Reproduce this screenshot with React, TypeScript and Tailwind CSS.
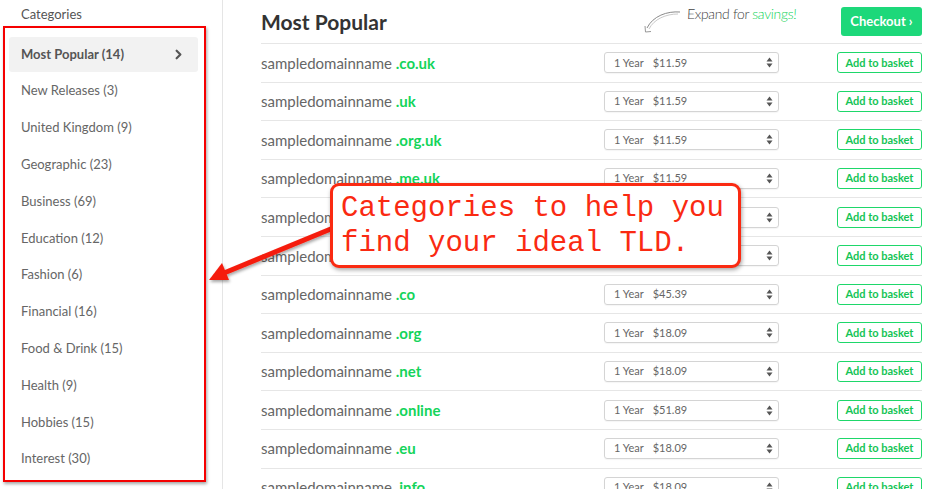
import { ChevronRight } from "lucide-react";

const CATEGORIES = [
  "Most Popular (14)",
  "New Releases (3)",
  "United Kingdom (9)",
  "Geographic (23)",
  "Business (69)",
  "Education (12)",
  "Fashion (6)",
  "Financial (16)",
  "Food & Drink (15)",
  "Health (9)",
  "Hobbies (15)",
  "Interest (30)",
];

const DOMAINS = [
  { tld: ".co.uk", price: "$11.59" },
  { tld: ".uk", price: "$11.59" },
  { tld: ".org.uk", price: "$11.59" },
  { tld: ".me.uk", price: "$11.59" },
  { tld: ".com", price: "$14.29" },
  { tld: ".london", price: "$32.49" },
  { tld: ".co", price: "$45.39" },
  { tld: ".org", price: "$18.09" },
  { tld: ".net", price: "$18.09" },
  { tld: ".online", price: "$51.89" },
  { tld: ".eu", price: "$18.09" },
  { tld: ".info", price: "$18.09" },
];

function SelectArrows() {
  return (
    <svg width="7" height="11" viewBox="0 0 7 11" className="text-[#555]">
      <path d="M3.5 0.5 L6.5 4.5 H0.5 Z" fill="currentColor" />
      <path d="M3.5 10.5 L6.5 6.5 H0.5 Z" fill="currentColor" />
    </svg>
  );
}

function DomainRow({ tld, price }: { tld: string; price: string }) {
  return (
    <div className="flex h-[38.6px] shrink-0 items-center border-b border-[#e6e6e6]">
      <div className="flex-1 text-[15px] text-[#666]">
        sampledomainname <span className="font-bold text-[#14d45a]">{tld}</span>
      </div>
      <div className="flex h-[21px] w-[175px] items-center rounded-[3px] border border-[#d4d4d4] pl-[9px] pr-[5px] text-[11px] text-[#666] shadow-[0_1px_1px_rgba(0,0,0,0.04)]">
        <span>1 Year</span>
        <span className="ml-[9px] flex-1">{price}</span>
        <SelectArrows />
      </div>
      <button className="ml-[58px] flex h-[21px] w-[85px] items-center justify-center rounded-[3px] border border-[#1ed76a] text-[11px] font-bold text-[#14c456]">
        Add to basket
      </button>
    </div>
  );
}

export default function App() {
  return (
    <div
      className="relative flex h-[489px] w-[927px] overflow-hidden bg-white"
      style={{ fontFamily: "Lato, 'Noto Sans', sans-serif" }}
    >
      {/* Sidebar */}
      <aside className="flex w-[223px] shrink-0 flex-col border-r border-[#e5e5e5] pt-[6px]">
        <h3 className="pl-[21px] text-[13px] leading-[16px] text-[#555]">Categories</h3>
        <ul className="mt-[14px] flex flex-col">
          {CATEGORIES.map((c, i) => (
            <li key={c} className="flex h-[36.8px] items-center">
              <div
                className={
                  i === 0
                    ? "ml-[9px] flex h-[35px] w-[189px] items-center justify-between rounded-[3px] bg-[#f2f2f2] pl-[12px] pr-[12px] text-[13px] font-bold text-[#555]"
                    : "ml-[9px] flex w-[189px] items-center pl-[12px] text-[13px] text-[#666]"
                }
              >
                {c}
                {i === 0 && <ChevronRight size={15} strokeWidth={3.5} className="text-[#555]" />}
              </div>
            </li>
          ))}
        </ul>
      </aside>

      {/* Main */}
      <main className="flex flex-1 flex-col pl-[38px] pr-[5px]">
        <header className="flex h-[44px] shrink-0 items-center border-b border-[#e6e6e6]">
          <h1 className="flex-1 text-[21px] font-bold text-[#333]">Most Popular</h1>
          <div className="mr-[44px] flex items-start self-start pt-[3px]">
            <svg width="40" height="24" viewBox="0 0 40 24" className="mt-[7px]">
              <path d="M37 2 C 24 1, 10 6, 4 18" fill="none" stroke="#8a8a8a" strokeWidth="1" />
              <path d="M35 4 C 23 4, 11 9, 6 19" fill="none" stroke="#bbb" strokeWidth="0.8" />
              <path d="M2 16 L 2.5 22 L 8 21.5" fill="none" stroke="#999" strokeWidth="1" />
            </svg>
            <span className="ml-[4px] -skew-x-3 text-[14px] font-light tracking-tight text-[#444]">
              Expand for <span className="text-[#14d45a]">savings!</span>
            </span>
          </div>
          <button className="flex h-[29px] w-[81px] items-center justify-center rounded-[3px] bg-[#1dd87a] text-[13px] font-bold text-white">
            Checkout ›
          </button>
        </header>
        {DOMAINS.map((d) => (
          <DomainRow key={d.tld} tld={d.tld} price={d.price} />
        ))}
      </main>

      {/* Annotation: red frame around categories */}
      <div className="pointer-events-none absolute left-[3px] top-[26px] h-[456px] w-[203px] border-2 border-[#f50000] shadow-[1px_2px_3px_rgba(0,0,0,0.35)]" />

      {/* Annotation: arrow */}
      <svg className="pointer-events-none absolute left-0 top-0" width="927" height="489">
        <defs>
          <filter id="sh" x="-20%" y="-20%" width="140%" height="140%">
            <feDropShadow dx="1" dy="2" stdDeviation="1.5" floodColor="#000" floodOpacity="0.35" />
          </filter>
        </defs>
        <g filter="url(#sh)">
          <line x1="338" y1="226" x2="224" y2="273" stroke="#f51c0c" strokeWidth="5" strokeLinecap="round" />
          <path d="M209 280 L 222 263 L 229 280 Z" fill="#f51c0c" />
        </g>
      </svg>

      {/* Annotation: callout */}
      <div
        className="pointer-events-none absolute left-[330px] top-[183px] flex h-[85px] w-[411px] flex-col justify-center rounded-[9px] border-[3px] border-[#fa2a12] bg-white pl-[8px] text-[29px] leading-[35px] text-[#fa2a12] shadow-[1px_2px_4px_rgba(0,0,0,0.35)]"
        style={{ fontFamily: "'Liberation Mono', monospace" }}
      >
        <div>Categories to help you</div>
        <div>find your ideal TLD.</div>
      </div>
    </div>
  );
}
